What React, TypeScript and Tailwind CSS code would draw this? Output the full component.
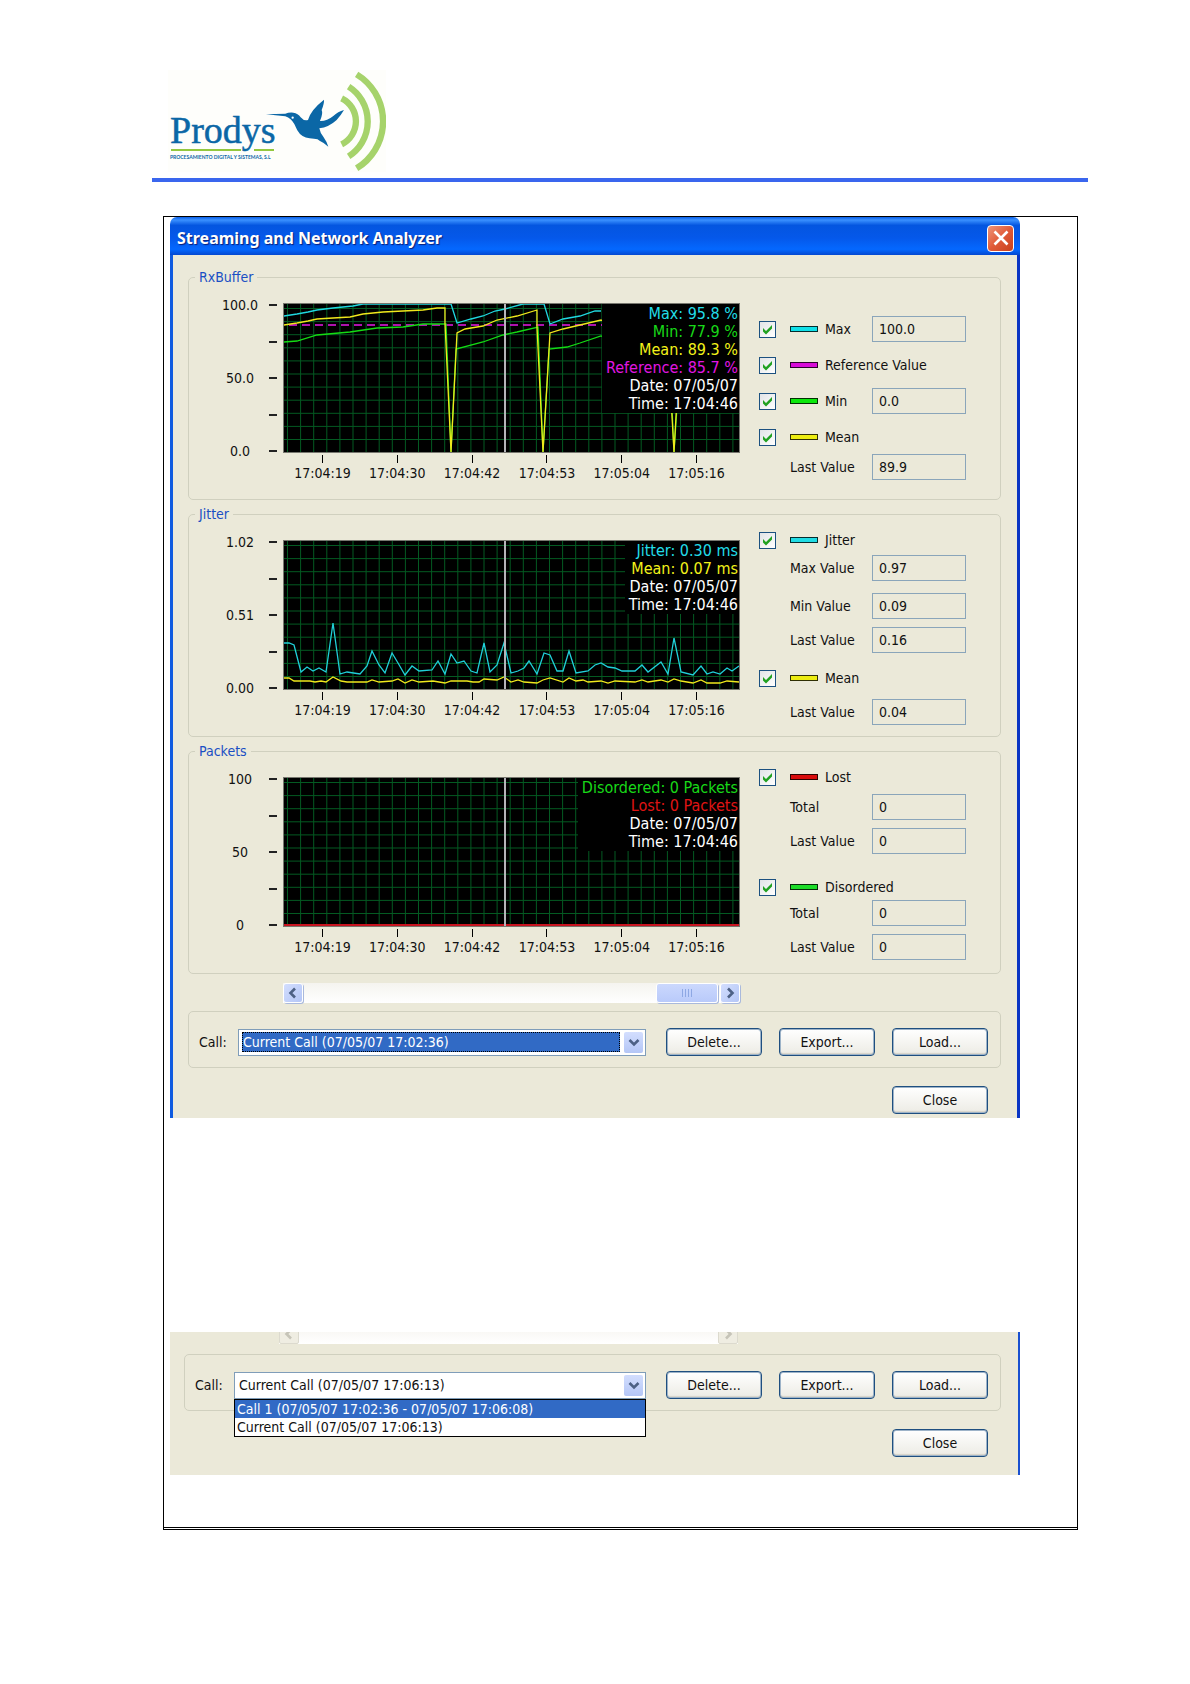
import { useId, type ReactNode } from "react";

type Point = [number, number];

const TIMES = ["17:04:19", "17:04:30", "17:04:42", "17:04:53", "17:05:04", "17:05:16"];

const GRID_X = Array.from({ length: 35 }, (_, i) => 4.5 + i * 13.1);
const GRID_Y = Array.from({ length: 11 }, (_, i) => 5.5 + i * 13.1);

const RX_MAX: Point[] = [
  [1, 13], [14, 11], [25, 9], [34, 7], [50, 5], [70, 3], [80, 1], [168, 1], [174, 20], [188, 16],
  [200, 13], [212, 8], [222, 6], [240, 1], [261, 1], [267, 21], [280, 16], [297, 13], [312, 8], [318, 8],
];

const RX_MEAN: Point[] = [
  [1, 22], [14, 20], [25, 18], [34, 16], [50, 15], [67, 14], [80, 11], [100, 9], [120, 8], [140, 7],
  [154, 5], [162, 5], [162, 20], [168, 149], [174, 30], [182, 26], [200, 23], [214, 17], [234, 13],
  [254, 7], [254, 24], [260, 149], [267, 30], [280, 26], [297, 22], [318, 17], [386, 60], [391, 149], [396, 60],
];

const RX_MIN: Point[] = [
  [1, 39], [14, 38], [34, 32], [67, 29], [94, 25], [120, 24], [140, 21], [163, 21], [168, 149], [173, 46],
  [200, 39], [220, 32], [234, 29], [255, 24], [260, 149], [266, 46], [284, 44], [297, 40], [318, 33],
  [387, 60], [391, 149], [397, 60],
];

const JITTER: Point[] = [
  [1, 103], [6, 103], [11, 105], [18, 132], [24, 127], [30, 131], [36, 128], [43, 132], [50, 83], [57, 134],
  [64, 132], [77, 134], [84, 126], [89, 111], [96, 125], [102, 133], [109, 113], [115, 123], [122, 135],
  [129, 126], [136, 131], [149, 130], [155, 121], [162, 134], [168, 114], [174, 123], [181, 121], [188, 131],
  [194, 133], [201, 103], [207, 132], [214, 125], [221, 103], [228, 133], [235, 131], [241, 128], [246, 121],
  [254, 134], [261, 113], [267, 115], [274, 131], [280, 131], [286, 111], [293, 133], [305, 131], [312, 125],
  [318, 123], [325, 127], [332, 128], [339, 131], [352, 131], [359, 125], [365, 132], [378, 122], [385, 134],
  [391, 98], [398, 132], [410, 135], [418, 126], [424, 134], [430, 132], [437, 134], [444, 128], [449, 131],
  [456, 126],
];

const JITTER_MEAN: Point[] = [
  [1, 138], [6, 138], [11, 141], [27, 141], [32, 142], [38, 141], [43, 142], [50, 137], [58, 141], [64, 142],
  [84, 142], [89, 140], [96, 142], [109, 141], [115, 139], [122, 143], [129, 140], [136, 142], [150, 141],
  [162, 143], [168, 141], [184, 141], [190, 142], [196, 142], [201, 139], [214, 140], [221, 137], [228, 142],
  [235, 140], [241, 142], [254, 143], [260, 140], [267, 138], [280, 142], [286, 138], [293, 141], [300, 140],
  [305, 142], [318, 141], [325, 143], [332, 141], [352, 142], [359, 140], [365, 142], [378, 140], [385, 142],
  [391, 139], [398, 141], [410, 143], [418, 140], [424, 143], [437, 143], [444, 141], [456, 142],
];

function Line({ points, color }: { points: Point[]; color: string }) {
  return (
    <polyline
      points={points.map((p) => p.join(",")).join(" ")}
      fill="none"
      stroke={color}
      strokeWidth={1.3}
    />
  );
}

function Plot({ children, readout }: { children: ReactNode; readout: ReactNode }) {
  return (
    <div className="relative h-[150px]">
      <svg className="block w-full h-full bg-black" viewBox="0 0 457 150" preserveAspectRatio="none">
        {GRID_X.map((x) => (
          <line key={x} x1={x} x2={x} y1={0} y2={150} stroke="#045a22" />
        ))}
        {GRID_Y.map((y) => (
          <line key={y} x1={0} x2={457} y1={y} y2={y} stroke="#045a22" />
        ))}
        {children}
        <rect x={221} y={0} width={2} height={150} fill="#b4b4b8" />
      </svg>
      {/* Values under the cursor */}
      <div className="absolute top-px right-px bg-black pt-px pr-px pl-1 text-right text-[16px] leading-[18px] text-white whitespace-nowrap">
        {readout}
      </div>
      <div className="absolute inset-0 border border-[#77776f] pointer-events-none" />
    </div>
  );
}

function ValueBox({ value, label, id }: { value: string; label?: string; id?: string }) {
  return (
    <input
      id={id}
      type="text"
      readOnly
      defaultValue={value}
      aria-label={label}
      className="w-[94px] h-[26px] shrink-0 border border-[#8aa5ba] bg-transparent px-1.5 text-[14px] outline-none"
    />
  );
}

function SeriesRow({ swatch, label, value, className }: { swatch: string; label: string; value?: string; className?: string }) {
  const id = useId();
  return (
    <div className={`flex h-[26px] items-center ${className ?? ""}`}>
      <span className="relative mr-3.5 flex">
        <input
          id={id}
          type="checkbox"
          defaultChecked
          className="size-[17px] appearance-none border border-[#1c5180] bg-linear-to-br from-[#e2e4e6] to-white"
        />
        <svg className="absolute inset-0 size-full pointer-events-none" viewBox="0 0 17 17">
          <path d="M4 7v3.5l3 3 6-6V4L7 10z" fill="#21a121" />
        </svg>
      </span>
      <label htmlFor={id} className="flex items-center gap-[7px] whitespace-nowrap">
        <span className={`h-1.5 w-7 border border-black/80 ${swatch}`} />
        {label}
      </label>
      {value && (
        <span className="ml-auto flex">
          <ValueBox value={value} label={label} />
        </span>
      )}
    </div>
  );
}

function ValueRow({ label, value, className }: { label: string; value: string; className?: string }) {
  const id = useId();
  return (
    <div className={`flex h-[26px] items-center justify-between pl-[31px] ${className ?? ""}`}>
      <label htmlFor={id} className="whitespace-nowrap">{label}</label>
      <ValueBox id={id} value={value} />
    </div>
  );
}

function Panel({ title, scale, plot, children, className }: { title: string; scale: string[]; plot: ReactNode; children: ReactNode; className: string }) {
  return (
    <fieldset className="min-w-0 rounded-[5px] border border-[#d0d0bf]">
      <legend className="ml-1.5 px-1 leading-4 text-[#1a4fc4]">{title}</legend>
      <div className="flex">
        <div className="flex min-w-0 flex-1 pl-[22px] pt-[18px] pb-4">
          <div className="mr-1.5 flex h-[150px] flex-col justify-between py-[2px]">
            {scale.map((s, i) => (
              <div key={i} className="flex h-0 items-center">
                <span className="w-[58px] text-center">{s}</span>
                <span className="h-[2px] w-2 bg-[#222]" />
              </div>
            ))}
          </div>
          <div className="min-w-0 flex-1">
            {plot}
            <div className="mt-0.5 grid grid-cols-6 pl-0.5 pr-1.5">
              {TIMES.map((t) => (
                <div key={t} className="flex flex-col items-center">
                  <span className="h-2 w-px bg-black" />
                  <span className="leading-5">{t}</span>
                </div>
              ))}
            </div>
          </div>
        </div>
        <div className={`ml-[19px] mr-[34px] w-[207px] shrink-0 ${className}`}>{children}</div>
      </div>
    </fieldset>
  );
}

function Chevron({ d, color }: { d: string; color: string }) {
  return (
    <svg className="size-3" viewBox="0 0 12 12" fill="none" stroke={color} strokeWidth={2.6}>
      <path d={d} />
    </svg>
  );
}

const LEFT = "M8 1.5 3.5 6 8 10.5";
const RIGHT = "M4 1.5 8.5 6 4 10.5";
const DOWN = "M1.5 4 6 8.5 10.5 4";

function ScrollBar({ disabled }: { disabled?: boolean }) {
  const button = disabled
    ? "flex w-5 items-center justify-center rounded-[2px] border border-[#dcdace] bg-[#efede2]"
    : "flex w-5 items-center justify-center rounded-[3px] border border-white bg-linear-to-br from-[#d3defe] to-[#b4c6f6] shadow-[1px_1px_0_#a9b9dc]";
  const ink = disabled ? "#c6c4b8" : "#4d6185";
  return (
    <div className="flex h-5 shrink-0 w-full bg-linear-to-b from-[#f5f4ef] to-white">
      <button type="button" aria-label="Scroll left" disabled={disabled} className={button}>
        <Chevron d={LEFT} color={ink} />
      </button>
      <div className="flex flex-1 justify-end pr-0.5">
        {!disabled && (
          <div className="flex w-[62px] items-center justify-center gap-0.5 rounded-[3px] border border-white bg-linear-to-b from-[#cbd8fd] to-[#b9cafa] shadow-[1px_1px_0_#a9b9dc]">
            {[0, 1, 2, 3].map((n) => (
              <span key={n} className="h-2 w-px bg-[#8ea8e4]" />
            ))}
          </div>
        )}
      </div>
      <button type="button" aria-label="Scroll right" disabled={disabled} className={button}>
        <Chevron d={RIGHT} color={ink} />
      </button>
    </div>
  );
}

function PushButton({ children }: { children: ReactNode }) {
  return (
    <button
      type="button"
      className="h-7 w-24 shrink-0 rounded-[4px] border border-[#1f4f80] bg-linear-to-b from-white to-[#ecebe4] leading-5 shadow-[inset_0_0_0_1px_#9db3c8,inset_0_-2px_1px_#d8d4c8]"
    >
      {children}
    </button>
  );
}

function CallBar({ current, highlighted, options }: { current: string; highlighted?: boolean; options?: string[] }) {
  const id = useId();
  return (
    <div className="flex items-center rounded-[5px] border border-[#d0d0bf] pt-4 pr-3 pb-[11px] pl-2.5">
      <label htmlFor={id} className="w-[39px]">Call:</label>
      <div className="relative mr-5 flex h-[27px] min-w-0 flex-1 items-center border border-[#7f9db9] bg-white p-0.5">
        <select
          id={id}
          className={
            highlighted
              ? "mr-1 ml-px h-5 min-w-0 flex-1 appearance-none border border-dotted border-[#e0a050] bg-[#316ac5] leading-4 text-white outline-1 -outline-offset-1 outline-dotted outline-black"
              : "mr-1 h-5 min-w-0 flex-1 appearance-none bg-white pl-0.5 leading-4 outline-none"
          }
        >
          <option>{current}</option>
        </select>
        <span className="flex h-full w-[19px] items-center justify-center rounded-[2px] bg-linear-to-b from-[#d3defe] to-[#b4c6f6] pointer-events-none">
          <Chevron d={DOWN} color="#4d6185" />
        </span>
        {options && (
          <ul role="listbox" aria-label="Calls" className="absolute top-full -right-px -left-px z-10 mt-px border border-black bg-white">
            {options.map((o, i) => (
              <li
                key={o}
                role="option"
                aria-selected={i === 0}
                className={i === 0 ? "bg-[#316ac5] px-0.5 leading-[18px] text-white" : "px-0.5 leading-[18px]"}
              >
                {o}
              </li>
            ))}
          </ul>
        )}
      </div>
      <div className="flex gap-[17px]">
        <PushButton>Delete...</PushButton>
        <PushButton>Export...</PushButton>
        <PushButton>Load...</PushButton>
      </div>
    </div>
  );
}

function Logo() {
  return (
    <svg className="block h-[102px] w-[218px] bg-[#fefefb]" viewBox="0 0 218 102">
      <text x={2} y={73} fontSize={38} fill="#0b67a6" stroke="#0b67a6" strokeWidth={0.5} fontFamily="Liberation Serif, serif">
        Prodys
      </text>
      <path d="M3 80h70M86 80h20" stroke="#93c83e" strokeWidth={2} />
      <text x={2} y={89} fontSize={5} fontWeight={700} fill="#0b67a6" fontFamily="Lato, sans-serif">
        PROCESAMIENTO DIGITAL Y SISTEMAS, S.L
      </text>
      <g transform="translate(-28 -10) scale(.3333)">
        <path
          d="M378 163 436 161Q446 157 460 158 474 160 482 172 492 184 504 180 512 150 552 119 553 130 545 150 550 160 540 183 560 184 580 168 594 154 612 150 604 164 590 180 566 202 538 205 540 218 551 232 562 248 565 260 552 248 540 243 534 236 522 236 494 236 480 222 470 210 463 192 454 176 436 169Z"
          fill="#0b67a6"
        />
        <circle cx={458} cy={173} r={3.5} fill="#fff" />
        <g fill="none" stroke="#a6d36b" strokeWidth={19}>
          <path d="M605 115A77 77 0 0 1 605 253" />
          <path d="M626 80A124 124 0 0 1 626 289" />
          <path d="M650 43A165 165 0 0 1 650 325" />
        </g>
      </g>
    </svg>
  );
}

export default function App() {
  return (
    <div className="bg-white pt-[70px] pr-[102px] pb-[154px] pl-[152px] font-['DejaVu_Sans_Condensed','Noto_Sans',sans-serif] text-[14px] leading-5 text-[#111]">
      <header className="border-b-4 border-[#3a66ee] pb-1.5 pl-4">
        <Logo />
      </header>

      <main className="mt-[34px] mr-2.5 ml-[11px] border border-b-3 border-black [border-bottom-style:double] pl-1.5 pb-[52px]">
        <section className="mr-[57px]">
          {/* Title bar */}
          <div className="flex h-[38px] items-center justify-between rounded-t-[7px] bg-[linear-gradient(#0a5fe8,#3a90ff_8%,#0455e0_22%,#0558ea_55%,#0468ff_85%,#0448d0)] pt-1 pr-1.5 pl-[7px]">
            <h1 className="font-['Noto_Sans',sans-serif] text-[16px] font-bold text-white [text-shadow:1px_1px_1px_#0a1e78]">
              Streaming and Network Analyzer
            </h1>
            <button
              type="button"
              aria-label="Close window"
              className="flex size-[27px] items-center justify-center rounded-[4px] border border-white bg-linear-to-br from-[#ee9478] via-[#e05a38] to-[#c8401c]"
            >
              <svg className="size-4" viewBox="0 0 16 16" stroke="#fff" strokeWidth={2.6}>
                <path d="M1.5 1.5l13 13M14.5 1.5l-13 13" />
              </svg>
            </button>
          </div>

          <div className="border-r-3 border-l-3 border-r-[#0a35c4] border-l-[#0f5be0] bg-[#ebe9d9] pt-3.5 pr-4 pb-1 pl-[15px]">
            <div className="flex flex-col gap-1.5">
              <Panel
                title="RxBuffer"
                scale={["100.0", "", "50.0", "", "0.0"]}
                className="pt-[31px]"
                plot={
                  <Plot
                    readout={
                      <>
                        <p className="text-[#22dde8]">Max: 95.8 %</p>
                        <p className="text-[#18d818]">Min: 77.9 %</p>
                        <p className="text-[#f2f21a]">Mean: 89.3 %</p>
                        <p className="text-[#e216e2]">Reference: 85.7 %</p>
                        <p>Date: 07/05/07</p>
                        <p>Time: 17:04:46</p>
                      </>
                    }
                  >
                    <line x1={6} x2={456} y1={22} y2={22} stroke="#e818e8" strokeWidth={1.5} strokeDasharray="8 5" />
                    <Line points={RX_MAX} color="#20d8e0" />
                    <Line points={RX_MIN} color="#14dc14" />
                    <Line points={RX_MEAN} color="#f0e81c" />
                  </Plot>
                }
              >
                <SeriesRow swatch="bg-[#10e0e8]" label="Max" value="100.0" />
                <SeriesRow swatch="bg-[#d80cd8]" label="Reference Value" className="mt-2.5" />
                <SeriesRow swatch="bg-[#0ce80c]" label="Min" value="0.0" className="mt-2.5" />
                <SeriesRow swatch="bg-[#ecec10]" label="Mean" className="mt-2.5" />
                <ValueRow label="Last Value" value="89.9" className="mt-1" />
              </Panel>

              <Panel
                title="Jitter"
                scale={["1.02", "", "0.51", "", "0.00"]}
                className="pt-[5px]"
                plot={
                  <Plot
                    readout={
                      <>
                        <p className="text-[#22dde8]">Jitter: 0.30 ms</p>
                        <p className="text-[#f2f21a]">Mean: 0.07 ms</p>
                        <p>Date: 07/05/07</p>
                        <p>Time: 17:04:46</p>
                      </>
                    }
                  >
                    <Line points={JITTER} color="#20d0d8" />
                    <Line points={JITTER_MEAN} color="#f0e81c" />
                  </Plot>
                }
              >
                <SeriesRow swatch="bg-[#20dce4]" label="Jitter" />
                <ValueRow label="Max Value" value="0.97" className="mt-0.5" />
                <ValueRow label="Min Value" value="0.09" className="mt-3" />
                <ValueRow label="Last Value" value="0.16" className="mt-2" />
                <SeriesRow swatch="bg-[#ecec10]" label="Mean" className="mt-3" />
                <ValueRow label="Last Value" value="0.04" className="mt-2" />
              </Panel>

              <Panel
                title="Packets"
                scale={["100", "", "50", "", "0"]}
                className="pt-[5px]"
                plot={
                  <Plot
                    readout={
                      <>
                        <p className="text-[#18d818]">Disordered: 0 Packets</p>
                        <p className="text-[#e01414]">Lost: 0 Packets</p>
                        <p>Date: 07/05/07</p>
                        <p>Time: 17:04:46</p>
                      </>
                    }
                  >
                    <rect x={0} y={147} width={457} height={2} fill="#c81420" />
                  </Plot>
                }
              >
                <SeriesRow swatch="bg-[#d80c0c]" label="Lost" />
                <ValueRow label="Total" value="0" className="mt-1" />
                <ValueRow label="Last Value" value="0" className="mt-2" />
                <SeriesRow swatch="bg-[#1cdc28]" label="Disordered" className="mt-5" />
                <ValueRow label="Total" value="0" />
                <ValueRow label="Last Value" value="0" className="mt-2" />
              </Panel>
            </div>

            <div className="mt-[9px] mr-[261px] mb-2 ml-[95px]">
              <ScrollBar />
            </div>
            <CallBar current="Current Call (07/05/07 17:02:36)" highlighted />
            <div className="mt-[18px] flex justify-end pr-[13px]">
              <PushButton>Close</PushButton>
            </div>
          </div>
        </section>

        {/* Lower part of the dialog with the call list open */}
        <section className="mt-[214px] mr-[57px] border-r-2 border-[#1a50d0] bg-[#ebe9d9] pr-[17px] pb-[18px] pl-3.5">
          <div className="mr-[263px] mb-2.5 ml-[95px] flex h-3 items-end overflow-hidden">
            <ScrollBar disabled />
          </div>
          <CallBar
            current="Current Call (07/05/07 17:06:13)"
            options={["Call 1 (07/05/07 17:02:36 - 07/05/07 17:06:08)", "Current Call (07/05/07 17:06:13)"]}
          />
          <div className="mt-[18px] flex justify-end pr-[13px]">
            <PushButton>Close</PushButton>
          </div>
        </section>
      </main>
    </div>
  );
}
